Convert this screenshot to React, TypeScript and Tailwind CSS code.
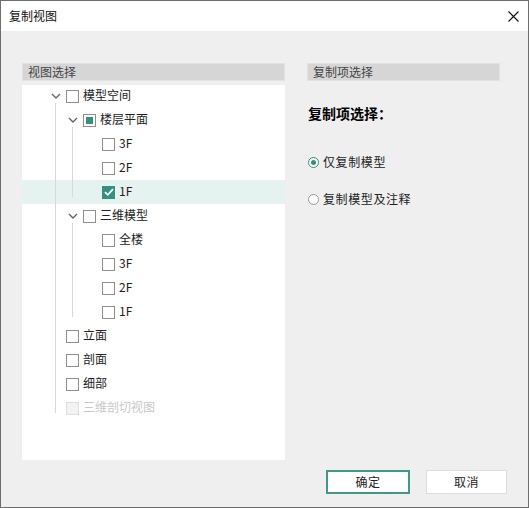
import React from "react";

type Row = {
  label: string;
  level: number; // indent of the checkbox: 0, 1, 2
  guides: ("full" | "top" | "none")[]; // per guide column (col0 at x55, col1 at x72)
  chevron?: boolean;
  check?: "on" | "off" | "part" | "disabled";
  selected?: boolean;
};

const rows: Row[] = [
  { label: "模型空间", level: 0, guides: [], chevron: true, check: "off" },
  { label: "楼层平面", level: 1, guides: ["full"], chevron: true, check: "part" },
  { label: "3F", level: 2, guides: ["full", "full"], check: "off" },
  { label: "2F", level: 2, guides: ["full", "full"], check: "off" },
  { label: "1F", level: 2, guides: ["full", "top"], check: "on", selected: true },
  { label: "三维模型", level: 1, guides: ["full"], chevron: true, check: "off" },
  { label: "全楼", level: 2, guides: ["full", "full"], check: "off" },
  { label: "3F", level: 2, guides: ["full", "full"], check: "off" },
  { label: "2F", level: 2, guides: ["full", "full"], check: "off" },
  { label: "1F", level: 2, guides: ["full", "top"], check: "off" },
  { label: "立面", level: 0, guides: ["full"], check: "off" },
  { label: "剖面", level: 0, guides: ["full"], check: "off" },
  { label: "细部", level: 0, guides: ["full"], check: "off" },
  { label: "三维剖切视图", level: 0, guides: ["top"], check: "disabled" },
];

function Chevron() {
  return (
    <svg width="10" height="6" viewBox="0 0 10 6" className="mt-[2px]">
      <path d="M1 1 L5 5 L9 1" fill="none" stroke="#666" strokeWidth="1.4" />
    </svg>
  );
}

function Checkbox({ state }: { state: Row["check"] }) {
  if (state === "on") {
    return (
      <div className="flex h-[13px] w-[13px] items-center justify-center bg-[#34917f]">
        <svg width="10" height="8" viewBox="0 0 10 8">
          <path d="M1 4.2 L3.8 6.8 L9 1.2" fill="none" stroke="#fff" strokeWidth="1.8" />
        </svg>
      </div>
    );
  }
  if (state === "part") {
    return (
      <div className="flex h-[13px] w-[13px] items-center justify-center border border-[#8f8f8f] bg-white">
        <div className="h-[7px] w-[7px] bg-[#34917f]" />
      </div>
    );
  }
  if (state === "disabled") {
    return <div className="h-[13px] w-[13px] border border-[#dedede] bg-[#f2f2f2]" />;
  }
  return <div className="h-[13px] w-[13px] border border-[#8f8f8f] bg-white" />;
}

// one 17px column of the tree gutter: a chevron, a guide line, or nothing
function GuideCol({ kind, chevron }: { kind: "full" | "top" | "none" | "chev"; chevron?: boolean }) {
  return (
    <div className="relative flex h-full w-[17px] shrink-0 flex-col items-center">
      {kind === "chev" && chevron ? (
        <>
          <div className="flex h-[19px] items-center pt-[2px]">
            <Chevron />
          </div>
          <div className="w-px flex-1 bg-[#d9d9d9]" />
        </>
      ) : kind === "full" ? (
        <div className="h-full w-px bg-[#d9d9d9]" />
      ) : kind === "top" ? (
        <div className="h-[17px] w-px bg-[#d9d9d9]" />
      ) : null}
    </div>
  );
}

function TreeRow({ row }: { row: Row }) {
  const cols: ("full" | "top" | "none" | "chev")[] = [...row.guides];
  if (row.chevron) cols.push("chev");
  const checkMargin = row.level === 2 ? "ml-[21px]" : "ml-[2px]";
  return (
    <div
      className={`flex h-[24px] items-stretch pl-[25px] ${row.selected ? "bg-[#e6f2ef]" : ""}`}
    >
      {cols.map((c, i) => (
        <GuideCol key={i} kind={c} chevron={c === "chev"} />
      ))}
      <div className={`flex items-center ${checkMargin}`}>
        <Checkbox state={row.check} />
        <span
          className={`ml-[4px] -mt-[2px] text-[12px] leading-none ${
            row.check === "disabled" ? "text-[#c8c8c8]" : "text-[#222]"
          }`}
        >
          {row.label}
        </span>
      </div>
    </div>
  );
}

function Radio({ on }: { on?: boolean }) {
  return (
    <div
      className={`flex h-[11px] w-[11px] items-center justify-center rounded-full border ${
        on ? "border-[#34917f] bg-white" : "border-[#9a9a9a] bg-white"
      }`}
    >
      {on ? <div className="h-[5px] w-[5px] rounded-full bg-[#34917f]" /> : null}
    </div>
  );
}

export default function App() {
  return (
    <div
      className="flex h-[508px] w-[529px] flex-col border border-[#6e6e6e] bg-[#efefef] text-[#222]"
      style={{ fontFamily: '"Noto Sans CJK SC", "Microsoft YaHei", sans-serif' }}
    >
      {/* title bar */}
      <div className="flex h-[30px] shrink-0 items-center justify-between bg-white pl-[8px] pr-[9px]">
        <span className="text-[12px] text-[#111]">复制视图</span>
        <svg width="11" height="11" viewBox="0 0 11 11">
          <path d="M0.5 0.5 L10.5 10.5 M10.5 0.5 L0.5 10.5" stroke="#111" strokeWidth="1.1" />
        </svg>
      </div>

      <div className="flex flex-1 flex-col px-[21px] pt-[32px]">
        <div className="flex gap-[22px]">
          {/* left: view tree */}
          <div className="flex w-[263px] flex-col">
            <div className="flex h-[18px] items-center border border-[#e2e2e2] bg-[#d6d6d6] pl-[5px] text-[12px] text-[#444]">
              视图选择
            </div>
            <div className="mt-[4px] h-[375px] bg-white">
              <div className="-mt-[1px]">
                {rows.map((r, i) => (
                  <TreeRow key={i} row={r} />
                ))}
              </div>
            </div>
          </div>

          {/* right: copy options */}
          <div className="flex w-[193px] flex-col">
            <div className="flex h-[18px] items-center border border-[#e2e2e2] bg-[#d6d6d6] pl-[5px] text-[12px] text-[#444]">
              复制项选择
            </div>
            <div className="mt-[25px] pl-[1px] text-[14px] font-bold leading-none text-black">
              复制项选择：
            </div>
            <div className="mt-[36px] flex items-center gap-[4px] pl-[1px]">
              <Radio on />
              <span className="text-[12px] leading-none tracking-[0.6px]">仅复制模型</span>
            </div>
            <div className="mt-[25px] flex items-center gap-[4px] pl-[1px]">
              <Radio />
              <span className="text-[12px] leading-none tracking-[0.6px]">复制模型及注释</span>
            </div>
          </div>
        </div>

        {/* buttons */}
        <div className="mt-[10px] flex justify-end gap-[16px]">
          <button className="h-[24px] w-[84px] border-2 border-[#3d9a86] bg-white text-[12px] tracking-[0.5px]">
            确定
          </button>
          <button className="h-[24px] w-[81px] border border-[#dcdcdc] bg-white text-[12px] tracking-[0.5px]">
            取消
          </button>
        </div>
      </div>
    </div>
  );
}
